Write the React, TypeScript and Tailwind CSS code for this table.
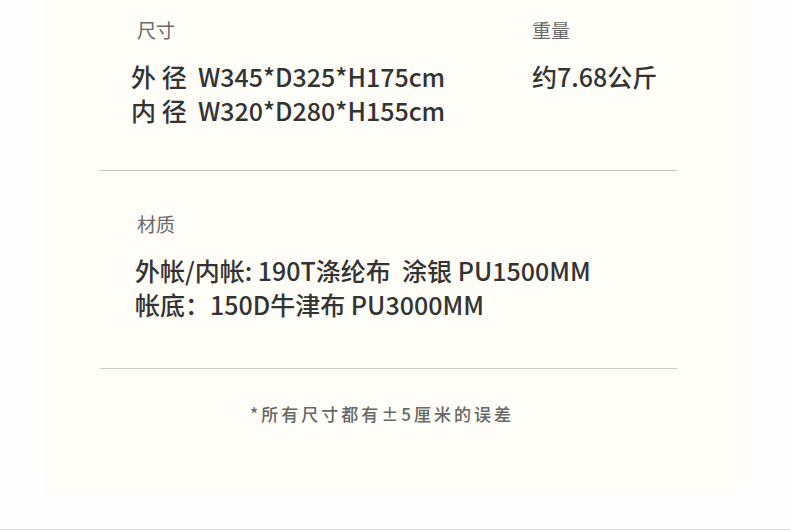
const font = "font-['Noto_Sans_CJK_SC','Noto_Sans',sans-serif]"

function Label({ children, className = "" }: { children: React.ReactNode; className?: string }) {
  return <div className={`text-[19px] leading-[26px] text-[#6a6a6a] ${className}`}>{children}</div>
}

export default function App() {
  return (
    <div className={`h-[531px] w-[790px] overflow-hidden bg-[#fefefe] ${font}`}>
      <div className="ml-[44px] h-[494px] w-[700px] bg-[#fefdf8] pt-[17px]">
        <div className="flex">
          <div className="ml-[87px] w-[401px]">
            <Label className="ml-[6px]">尺寸</Label>
            <div className="mt-[16px] text-[25px] font-medium leading-[34px] text-[#333333]">
              <p>外 径&nbsp; W345*D325*H175cm</p>
              <p>内 径&nbsp; W320*D280*H155cm</p>
            </div>
          </div>
          <div>
            <Label>重量</Label>
            <p className="mt-[16px] text-[25px] font-medium leading-[34px] text-[#333333]">约7.68公斤</p>
          </div>
        </div>

        <div className="ml-[56px] mt-[43px] h-px w-[577px] bg-[#c9c9c5]" />

        <div className="ml-[91px] pt-[40px]">
          <Label className="ml-[2px]">材质</Label>
          <div className="mt-[16px] text-[25px] font-medium leading-[34px] text-[#333333]">
            <p>外帐/内帐: 190T涤纶布&nbsp; 涂银 PU1500MM</p>
            <p>帐底：150D牛津布 PU3000MM</p>
          </div>
        </div>

        <div className="ml-[56px] mt-[47px] h-px w-[577px] bg-[#c9c9c5]" />

        <p className="mt-[32px] pr-[24px] text-center text-[17px] font-medium tracking-[3px] text-[#666666]">
          *所有尺寸都有±5厘米的误差
        </p>
      </div>
      <div className="mt-[35px] h-px w-full bg-[#dfe2e0]" />
    </div>
  )
}
